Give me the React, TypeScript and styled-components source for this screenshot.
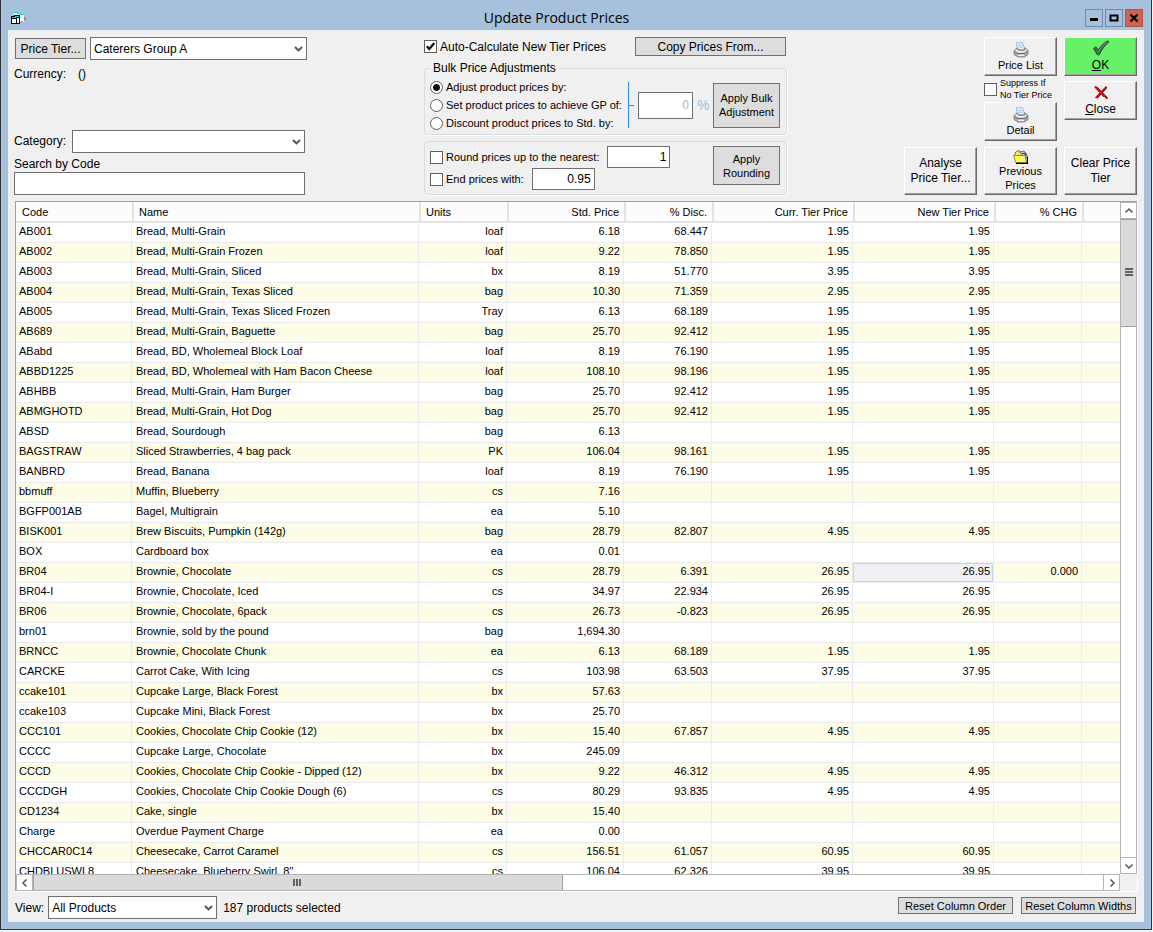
import React from "react";
import styled, { createGlobalStyle, css } from "styled-components";

const GlobalStyle = createGlobalStyle`
  * { box-sizing: border-box; }
  body { margin: 0; background: #f4f4f4; }
  body, button, input, select {
    font-family: "Liberation Sans", Arial, sans-serif;
    font-size: 12px;
    color: #000;
  }
`;

/* ---------- window frame ---------- */

const Window = styled.div`
  height: calc(100vh - 2px);
  min-height: 480px;
  margin-right: 1px;
  display: flex;
  flex-direction: column;
  background: #a7c0dc;
  border: 1px solid #2f3339;
  border-top-width: 0;
  padding: 0 7px 7px;
`;

const TitleBar = styled.header`
  flex: none;
  height: 30px;
  display: flex;
  align-items: center;
  padding: 6px 1px 0 2px;
  > svg { flex: none; }
`;

const Title = styled.h1`
  flex: 1;
  margin: 0;
  text-align: center;
  font: 400 14px/20px "Open Sans", "Noto Sans", sans-serif;
`;

const WindowButtons = styled.div`
  display: flex;
  gap: 2px;
`;

const WindowButton = styled.button<{ $close?: boolean }>`
  width: 18px;
  height: 18px;
  padding: 0;
  display: grid;
  place-items: center;
  border: 1px solid ${(p) => (p.$close ? "#b5533f" : "#6f8aac")};
  background: ${(p) => (p.$close ? "#cf6250" : "#a7c0dc")};
`;

const Client = styled.main`
  flex: 1;
  min-height: 0;
  display: flex;
  flex-direction: column;
  background: #f0f0f0;
  padding: 7px 7px 3px 6px;
`;

/* ---------- shared controls ---------- */

const FlatButton = styled.button<{ $w: number; $h: number; $small?: boolean }>`
  flex: none;
  width: ${(p) => p.$w}px;
  height: ${(p) => p.$h}px;
  padding: 0;
  border: 1px solid #707070;
  background: #dddddd;
  font-size: ${(p) => (p.$small ? 11 : 12)}px;
  line-height: 14px;
`;

const RaisedButton = styled.button<{ $h: number; $green?: boolean; $small?: boolean }>`
  width: 73px;
  height: ${(p) => p.$h}px;
  flex: none;
  padding: 0;
  display: flex;
  flex-direction: column;
  align-items: center;
  justify-content: center;
  gap: ${(p) => (p.$small ? 0 : 2)}px;
  border: 1px solid;
  border-color: #ffffff #696969 #696969 #ffffff;
  box-shadow: inset -1px -1px 0 #a0a0a0;
  background: ${(p) => (p.$green ? "#66f266" : "#f0f0f0")};
  font-size: ${(p) => (p.$small ? 11 : 12)}px;
  line-height: ${(p) => (p.$small ? 14 : 15)}px;
  svg { flex: none; }
`;

const TextInput = styled.input<{ $w?: number; $h: number; $muted?: boolean }>`
  width: ${(p) => (p.$w ? p.$w + "px" : "100%")};
  height: ${(p) => p.$h}px;
  padding: 0 3px 1px;
  border: 1px solid #707070;
  border-radius: 0;
  background: #fff;
  text-align: ${(p) => (p.$w ? "right" : "left")};
  color: ${(p) => (p.$muted ? "#a3b8d6" : "#000")};
`;

const SelectWrap = styled.span<{ $w: number }>`
  position: relative;
  width: ${(p) => p.$w}px;
  height: 23px;
  select {
    appearance: none;
    display: block;
    width: 100%;
    height: 100%;
    padding: 0 20px 0 3px;
    border: 1px solid #707070;
    border-radius: 0;
    background: #fff;
  }
  svg {
    position: absolute;
    right: 4px;
    top: 9px;
    pointer-events: none;
  }
`;

function Select({ id, label, width, options }: { id: string; label?: string; width: number; options: string[] }) {
  return (
    <SelectWrap $w={width}>
      <select id={id} aria-label={label}>
        {options.map((o) => (
          <option key={o}>{o}</option>
        ))}
      </select>
      <svg width="9" height="6" viewBox="0 0 9 6">
        <path d="M1 1 4.500 4.400 8 1" fill="none" stroke="#555" strokeWidth="2" />
      </svg>
    </SelectWrap>
  );
}

const tickBox = css`
  appearance: none;
  flex: none;
  width: 13px;
  height: 13px;
  margin: 0;
  border: 1px solid #606060;
  background: #fff;
`;

const CheckWrap = styled.span`
  display: grid;
  width: 13px;
  height: 13px;
  flex: none;
  input { ${tickBox} grid-area: 1 / 1; }
  svg { grid-area: 1 / 1; visibility: hidden; pointer-events: none; z-index: 1; }
  input:checked + svg { visibility: visible; }
`;

function CheckBox({ id, checked }: { id: string; checked?: boolean }) {
  return (
    <CheckWrap>
      <input id={id} type="checkbox" defaultChecked={checked} />
      <svg width="13" height="13" viewBox="0 0 13 13">
        <path d="M2.800 6.200 5.300 9 10.300 3" fill="none" stroke="#111" strokeWidth="2.200" />
      </svg>
    </CheckWrap>
  );
}

const Radio = styled.input`
  ${tickBox}
  border-radius: 50%;
  &:checked { background: radial-gradient(circle, #111 0 3px, #fff 4px); }
`;

const Row = styled.div<{ $gap?: number }>`
  display: flex;
  align-items: center;
  gap: ${(p) => p.$gap ?? 4}px;
`;

const Spread = styled.div`
  display: flex;
  justify-content: space-between;
`;

/* ---------- toolbar ---------- */

const Toolbar = styled.section`
  flex: none;
  display: flex;
  justify-content: space-between;
  margin-bottom: 6px;
`;

const Filters = styled.div`
  width: 293px;
  display: flex;
  flex-direction: column;
`;

const TierRow = styled(Row)`
  padding-left: 1px;
`;

const Currency = styled.p`
  margin: 6px 0 0;
  line-height: 16px;
  display: flex;
  gap: 12px;
`;

const SearchArea = styled.div`
  width: 291px;
  margin-top: auto;
  display: flex;
  flex-direction: column;
`;

const SearchLabel = styled.label`
  margin-top: 3px;
  line-height: 16px;
`;

const Adjustments = styled.div`
  width: 363px;
`;

const TopRow = styled.div`
  display: flex;
  justify-content: space-between;
  height: 19px;
  padding-right: 1px;
  align-items: center;
`;

const Group = styled.fieldset`
  margin: 4px 0 0;
  min-width: 0;
  padding: 2px 6px 2px 5px;
  border: 1px solid #d3dde5;
  border-radius: 3px;
  box-shadow: 0 1px 0 #fff, 1px 0 0 #fff;
  font-size: 11px;
  legend {
    padding: 0 3px;
    font-size: 12px;
    line-height: 16px;
  }
`;

const RoundingGroup = styled(Group)`
  margin-top: 6px;
  padding-top: 4px;
  padding-bottom: 4px;
`;

const AdjustBody = styled.div`
  display: flex;
  align-items: center;
`;

const Choices = styled.div`
  width: 193px;
  label { display: flex; align-items: center; gap: 3px; height: 18px; white-space: nowrap; }
`;

const Bracket = styled.svg`
  flex: none;
  margin-left: 4px;
  margin-right: 4px;
  fill: #2e8df0;
`;

const Percent = styled.span`
  flex: 1;
  padding-left: 4px;
  font-size: 14px;
  color: #a3b8d6;
`;

const Rounding = styled.div`
  display: flex;
  flex-direction: column;
`;

const RoundRow = styled.div`
  display: flex;
  align-items: center;
  gap: 3px;
  height: 22px;
  input[type="text"] { margin-left: 5px; }
`;

const Actions = styled.div`
  display: flex;
  gap: 7px;
`;

const ActionColumn = styled.div<{ $end?: boolean }>`
  display: flex;
  flex-direction: column;
  justify-content: ${(p) => (p.$end ? "flex-end" : "flex-start")};
  height: 158px;
  > :last-child { margin-top: auto; }
`;

const CloseSlot = styled.div`
  margin-top: 5px;
  display: flex;
`;

const Suppress = styled.label`
  display: flex;
  align-items: center;
  gap: 3px;
  height: 26px;
  font-size: 9px;
  line-height: 12px;
  white-space: nowrap;
`;

/* ---------- price grid ---------- */

const GridFrame = styled.section`
  flex: 1;
  min-height: 0;
  margin-left: 1px;
  display: grid;
  grid-template-columns: minmax(0, 1fr) 17px;
  grid-template-rows: minmax(0, 1fr) 17px;
  border-top: 1px solid #a0a0a0;
  border-left: 1px solid #a0a0a0;
  box-shadow: 0 1px 0 #fff, 1px 0 0 #fff;
`;

const GridView = styled.div`
  overflow: hidden;
  background: #fff;
`;

const Table = styled.table`
  width: 100%;
  table-layout: fixed;
  border-collapse: separate;
  border-spacing: 0;
  font-size: 11px;
`;

const Th = styled.th<{ $left?: boolean }>`
  height: 21px;
  padding: 0 5px;
  font-weight: 400;
  text-align: ${(p) => (p.$left ? "left" : "right")};
  background: #fcfcfc;
  border-left: 2px solid #e2e2e2;
  border-bottom: 2px solid #e4e4e4;
  &:first-child { border-left: 0; padding-left: 6px; }
`;

const Tr = styled.tr`
  background: #fff;
  &:nth-child(even) { background: #fcfbe6; }
`;

const Td = styled.td<{ $left?: boolean; $selected?: boolean }>`
  height: 20px;
  padding: 0 3px 3px 4px;
  line-height: 16px;
  white-space: nowrap;
  overflow: hidden;
  text-align: ${(p) => (p.$left ? "left" : "right")};
  border-right: 1px solid #ececf0;
  border-bottom: 1px solid #ececf0;
  &:first-child { padding-left: 3px; }
  &:last-child { border-right: 0; }
  ${(p) => p.$selected && css`
    background: #eef0f4;
    box-shadow: inset 0 0 0 1px #c3d5ea;
  `}
`;

const Bar = styled.div<{ $vertical?: boolean }>`
  display: flex;
  flex-direction: ${(p) => (p.$vertical ? "column" : "row")};
  background: #fff;
  border: 0 solid #b4b4b4;
  ${(p) => (p.$vertical ? "border-left-width: 1px; border-right-width: 1px;" : "border-top-width: 1px; border-bottom-width: 1px;")}
`;

const BarButton = styled.button<{ $vertical?: boolean }>`
  flex: none;
  width: ${(p) => (p.$vertical ? "100%" : "17px")};
  height: ${(p) => (p.$vertical ? "17px" : "100%")};
  padding: 0;
  display: grid;
  place-items: center;
  background: #fff;
  border: 0 solid #b4b4b4;
  ${(p) => (p.$vertical ? "border-top-width: 1px; border-bottom-width: 1px;" : "border-left-width: 1px; border-right-width: 1px;")}
`;

const Thumb = styled.div<{ $vertical?: boolean }>`
  flex: 0 0 auto;
  ${(p) => (p.$vertical ? "height: 16%;" : "width: 48%;")}
  display: grid;
  place-items: center;
  background: #dadada;
  border: 0 solid #a0a0a0;
  ${(p) => (p.$vertical ? "border-top-width: 1px; border-bottom-width: 1px;" : "border-left-width: 1px; border-right-width: 1px;")}
`;

const Track = styled.div`
  flex: 1;
`;

/* ---------- footer ---------- */

const Footer = styled.footer`
  flex: none;
  display: flex;
  align-items: center;
  height: 28px;
  padding: 5px 1px 0;
  label { margin-right: 4px; }
`;

const Count = styled.span`
  flex: 1;
  margin-left: 6px;
`;

const ResetButtons = styled(Row)`
  align-self: flex-start;
  padding-top: 1px;
`;

/* ---------- icons ---------- */

const AppIcon = () => (
  <svg width="18" height="14" viewBox="0 0 18 14" shapeRendering="crispEdges">
    <path d="M4 2h4v1h3v1h3v7H9V4H4z" fill="#fff" />
    <path d="M4 1h4v1H4zM7 2h4v1H7zM10 3h4v1h-4z" fill="#00e0f0" />
    <path d="M14 6h1v1h1v2h-2zM9 11h2v1H9zM11 10h2v1h-2z" fill="#888" />
    <path d="M4 4h6v9H4z" fill="#000" />
    <path d="M1 5h6v8H1z" fill="#000" />
    <path d="M5 5h4v1H5zM2 6h4v1H2z" fill="#00e0f0" />
    <path d="M7 7h2v5H7zM2 8h4v4H2z" fill="#fff" />
  </svg>
);

const Printer = () => (
  <svg width="16" height="16" viewBox="0 0 16 16">
    <path d="M3 .8h6.500l2.500 7H5z" fill="#eef6ff" stroke="#8fb0dd" strokeWidth=".9" />
    <path d="M4.800 3.200h4.400M5.500 5.200h4.400" stroke="#9cc0ee" />
    <path d="M1 8.800 3.800 6l1 .3.900 1.700h6l-.6-2h1.400L15 8.800v3.700L11.500 15H5l-4-2.500z" fill="#b2b2b2" stroke="#747474" strokeWidth=".8" />
    <path d="M1.800 9 4 7l1.200 2h6.900l-.4-2.200L14 8.900 11 10.800H4.800z" fill="#ececec" />
    <path d="M1.300 9.500 5 11.500h6.500l3.300-2.300" fill="none" stroke="#5c5c5c" strokeWidth=".9" />
    <path d="M5.300 13.300h5.700" stroke="#f5f5f5" strokeWidth="1.300" />
    <path d="M12.300 12.300h1.200" stroke="#6fa850" />
  </svg>
);

const Tick = () => (
  <svg width="18" height="16" viewBox="0 0 18 16">
    <path d="M1.500 8.500 4 6.800 6.500 10C8.500 6 11.500 3 16 .800l.6 1.400C12.800 5.500 9.500 9.500 7.300 14.800H5.300z" fill="#2f7d3b" stroke="#4a2a4a" strokeWidth=".9" />
    <path d="M6.300 12C8.500 7.500 11.500 4.500 15 2.300" fill="none" stroke="#57b062" strokeWidth=".9" />
  </svg>
);

const Cross = () => (
  <svg width="16" height="15" viewBox="0 0 16 15">
    <path d="M4 2.500 14.500 13.500M13.800 2.300 4 13" stroke="#000" strokeWidth="1.200" />
    <path d="M2 1.500 11.500 11.500" stroke="#f0000c" strokeWidth="2.400" />
    <path d="M11 11 14 13.800" stroke="#f0000c" strokeWidth="1" />
    <path d="M13.500 1.500 2.500 13" stroke="#f0000c" strokeWidth="1.700" />
  </svg>
);

const Folder = () => (
  <svg width="16" height="14" viewBox="0 0 16 14">
    <path d="M2 5V3l2-2h3l1.500 2H13v4" fill="#f4ee4a" stroke="#6b6b00" strokeWidth=".9" />
    <path d="M7 2.500 11 1l4 6-3 1z" fill="#fff" stroke="#223" strokeWidth=".7" />
    <path d="M9 3.500h3l1 3" fill="none" stroke="#2244bb" strokeWidth="1.300" />
    <path d="M.700 5.500h11.500l1 7H2.500z" fill="#fff35a" stroke="#8a8a20" strokeWidth=".9" />
    <path d="M2.500 7.500h8.500M3 9.500h9M3.500 11.300h9" stroke="#fffde0" strokeDasharray="1 1" />
    <path d="M3 13.400h11.400V7" fill="none" stroke="#000" strokeWidth="1.200" />
  </svg>
);

const arrows = {
  up: "M1.500 6.500 5 3l3.500 3.500",
  down: "M1.500 3.500 5 7l3.500-3.500",
  left: "M6.500 1.500 3 5l3.500 3.500",
  right: "M3.500 1.500 7 5 3.500 8.500",
};

const Arrow = ({ dir }: { dir: keyof typeof arrows }) => (
  <svg width="10" height="10" viewBox="0 0 10 10">
    <path d={arrows[dir]} fill="none" stroke="#555" strokeWidth="1.500" />
  </svg>
);

/* ---------- data ---------- */

const columns: { name: string; width?: number; left?: boolean }[] = [
  { name: "Code", width: 116, left: true },
  { name: "Name", width: 287, left: true },
  { name: "Units", width: 88, left: true },
  { name: "Std. Price", width: 117 },
  { name: "% Disc.", width: 88 },
  { name: "Curr. Tier Price", width: 141 },
  { name: "New Tier Price", width: 141 },
  { name: "% CHG", width: 88 },
  { name: "" },
];

// code, name, units, standard price, discount, tier price, change
const products: string[][] = [
  ["AB001", "Bread, Multi-Grain", "loaf", "6.18", "68.447", "1.95"],
  ["AB002", "Bread, Multi-Grain Frozen", "loaf", "9.22", "78.850", "1.95"],
  ["AB003", "Bread, Multi-Grain, Sliced", "bx", "8.19", "51.770", "3.95"],
  ["AB004", "Bread, Multi-Grain, Texas Sliced", "bag", "10.30", "71.359", "2.95"],
  ["AB005", "Bread, Multi-Grain, Texas Sliced Frozen", "Tray", "6.13", "68.189", "1.95"],
  ["AB689", "Bread, Multi-Grain, Baguette", "bag", "25.70", "92.412", "1.95"],
  ["ABabd", "Bread, BD, Wholemeal Block Loaf", "loaf", "8.19", "76.190", "1.95"],
  ["ABBD1225", "Bread, BD, Wholemeal with Ham Bacon Cheese", "loaf", "108.10", "98.196", "1.95"],
  ["ABHBB", "Bread, Multi-Grain, Ham Burger", "bag", "25.70", "92.412", "1.95"],
  ["ABMGHOTD", "Bread, Multi-Grain, Hot Dog", "bag", "25.70", "92.412", "1.95"],
  ["ABSD", "Bread, Sourdough", "bag", "6.13"],
  ["BAGSTRAW", "Sliced Strawberries, 4 bag pack", "PK", "106.04", "98.161", "1.95"],
  ["BANBRD", "Bread, Banana", "loaf", "8.19", "76.190", "1.95"],
  ["bbmuff", "Muffin, Blueberry", "cs", "7.16"],
  ["BGFP001AB", "Bagel, Multigrain", "ea", "5.10"],
  ["BISK001", "Brew Biscuits, Pumpkin (142g)", "bag", "28.79", "82.807", "4.95"],
  ["BOX", "Cardboard box", "ea", "0.01"],
  ["BR04", "Brownie, Chocolate", "cs", "28.79", "6.391", "26.95", "0.000"],
  ["BR04-I", "Brownie, Chocolate, Iced", "cs", "34.97", "22.934", "26.95"],
  ["BR06", "Brownie, Chocolate, 6pack", "cs", "26.73", "-0.823", "26.95"],
  ["brn01", "Brownie, sold by the pound", "bag", "1,694.30"],
  ["BRNCC", "Brownie, Chocolate Chunk", "ea", "6.13", "68.189", "1.95"],
  ["CARCKE", "Carrot Cake, With Icing", "cs", "103.98", "63.503", "37.95"],
  ["ccake101", "Cupcake Large, Black Forest", "bx", "57.63"],
  ["ccake103", "Cupcake Mini, Black Forest", "bx", "25.70"],
  ["CCC101", "Cookies, Chocolate Chip Cookie (12)", "bx", "15.40", "67.857", "4.95"],
  ["CCCC", "Cupcake Large, Chocolate", "bx", "245.09"],
  ["CCCD", "Cookies, Chocolate Chip Cookie - Dipped (12)", "bx", "9.22", "46.312", "4.95"],
  ["CCCDGH", "Cookies, Chocolate Chip Cookie Dough (6)", "cs", "80.29", "93.835", "4.95"],
  ["CD1234", "Cake, single", "bx", "15.40"],
  ["Charge", "Overdue Payment Charge", "ea", "0.00"],
  ["CHCCAR0C14", "Cheesecake, Carrot Caramel", "cs", "156.51", "61.057", "60.95"],
  ["CHDBLUSWL8", "Cheesecake, Blueberry Swirl, 8\"", "cs", "106.04", "62.326", "39.95"],
];

export default function App() {
  return (
    <>
      <GlobalStyle />
      <Window>
        <TitleBar>
          <AppIcon />
          <Title>Update Product Prices</Title>
          <WindowButtons>
            <WindowButton aria-label="Minimize">
              <svg width="10" height="10" viewBox="0 0 10 10"><path d="M1 6.500h8" stroke="#000" strokeWidth="3" /></svg>
            </WindowButton>
            <WindowButton aria-label="Maximize">
              <svg width="10" height="10" viewBox="0 0 10 10"><path d="M1.500 2.500h7v5h-7z" fill="none" stroke="#000" strokeWidth="2" /></svg>
            </WindowButton>
            <WindowButton $close aria-label="Close window">
              <svg width="10" height="10" viewBox="0 0 10 10"><path d="m1.500 1.500 7 7m0-7-7 7" stroke="#000" strokeWidth="2.200" /></svg>
            </WindowButton>
          </WindowButtons>
        </TitleBar>

        <Client>
          <Toolbar>
            <Filters>
              <TierRow>
                <FlatButton $w={71} $h={21}>Price Tier...</FlatButton>
                <Select id="tier" label="Price tier" width={217} options={["Caterers Group A"]} />
              </TierRow>
              <Currency><span>Currency:</span><span>()</span></Currency>
              <SearchArea>
                <Spread>
                  <SearchLabel htmlFor="category">Category:</SearchLabel>
                  <Select id="category" width={233} options={[""]} />
                </Spread>
                <SearchLabel htmlFor="search">Search by Code</SearchLabel>
                <TextInput id="search" type="text" $h={23} />
              </SearchArea>
            </Filters>

            <Adjustments>
              <TopRow>
                <Row $gap={3}>
                  <CheckBox id="auto" checked />
                  <label htmlFor="auto">Auto-Calculate New Tier Prices</label>
                </Row>
                <FlatButton $w={151} $h={19}>Copy Prices From...</FlatButton>
              </TopRow>
              <Group>
                <legend>Bulk Price Adjustments</legend>
                <AdjustBody>
                  <Choices>
                    <label><Radio type="radio" name="mode" defaultChecked />Adjust product prices by:</label>
                    <label><Radio type="radio" name="mode" />Set product prices to achieve GP of:</label>
                    <label><Radio type="radio" name="mode" />Discount product prices to Std. by:</label>
                  </Choices>
                  <Bracket width="7" height="46" viewBox="0 0 7 46">
                    <path d="M1 0h1v23h5v1H2v22H1z" />
                  </Bracket>
                  <TextInput type="text" aria-label="Adjustment percentage" $w={55} $h={27} $muted defaultValue="0" />
                  <Percent>%</Percent>
                  <FlatButton $w={67} $h={45} $small>Apply Bulk<br />Adjustment</FlatButton>
                </AdjustBody>
              </Group>
              <RoundingGroup>
                <Spread>
                  <Rounding>
                    <RoundRow>
                      <CheckBox id="round" />
                      <label htmlFor="round">Round prices up to the nearest:</label>
                      <TextInput type="text" aria-label="Nearest" $w={63} $h={22} defaultValue="1" />
                    </RoundRow>
                    <RoundRow>
                      <CheckBox id="end" />
                      <label htmlFor="end">End prices with:</label>
                      <TextInput type="text" aria-label="Ending" $w={63} $h={22} defaultValue="0.95" />
                    </RoundRow>
                  </Rounding>
                  <FlatButton $w={67} $h={39} $small>Apply<br />Rounding</FlatButton>
                </Spread>
              </RoundingGroup>
            </Adjustments>

            <Actions>
              <ActionColumn $end>
                <RaisedButton $h={48}><span>Analyse<br />Price Tier...</span></RaisedButton>
              </ActionColumn>
              <ActionColumn>
                <RaisedButton $h={39} $small><Printer />Price List</RaisedButton>
                <Suppress htmlFor="suppress">
                  <CheckBox id="suppress" />
                  <span>Suppress If<br />No Tier Price</span>
                </Suppress>
                <RaisedButton $h={39} $small><Printer />Detail</RaisedButton>
                <RaisedButton $h={48} $small><Folder /><span>Previous<br />Prices</span></RaisedButton>
              </ActionColumn>
              <ActionColumn>
                <RaisedButton $h={39} $green><Tick /><span><u>O</u>K</span></RaisedButton>
                <CloseSlot>
                  <RaisedButton $h={39}><Cross /><span><u>C</u>lose</span></RaisedButton>
                </CloseSlot>
                <RaisedButton $h={48}><span>Clear Price<br />Tier</span></RaisedButton>
              </ActionColumn>
            </Actions>
          </Toolbar>

          <GridFrame>
            <GridView>
              <Table>
                <colgroup>
                  {columns.map((c) => (
                    <col key={c.name} width={c.width} />
                  ))}
                </colgroup>
                <thead>
                  <tr>
                    {columns.map((c) => (
                      <Th key={c.name} $left={c.left}>{c.name}</Th>
                    ))}
                  </tr>
                </thead>
                <tbody>
                  {products.map(([code, name, units, std, disc, tier, chg]) => (
                    <Tr key={code}>
                      <Td $left>{code}</Td>
                      <Td $left>{name}</Td>
                      <Td>{units}</Td>
                      <Td>{std}</Td>
                      <Td>{disc}</Td>
                      <Td>{tier}</Td>
                      <Td $selected={code === "BR04"}>{tier}</Td>
                      <Td>{chg}</Td>
                      <Td />
                    </Tr>
                  ))}
                </tbody>
              </Table>
            </GridView>
            <Bar $vertical>
              <BarButton $vertical aria-label="Scroll up"><Arrow dir="up" /></BarButton>
              <Thumb $vertical>
                <svg width="8" height="9" viewBox="0 0 8 9"><path d="M0 1h8M0 4h8M0 7h8" stroke="#606060" strokeWidth="2" /></svg>
              </Thumb>
              <Track />
              <BarButton $vertical aria-label="Scroll down"><Arrow dir="down" /></BarButton>
            </Bar>
            <Bar>
              <BarButton aria-label="Scroll left"><Arrow dir="left" /></BarButton>
              <Thumb>
                <svg width="9" height="8" viewBox="0 0 9 8"><path d="M1 0v7M4 0v7M7 0v7" stroke="#606060" strokeWidth="2" /></svg>
              </Thumb>
              <Track />
              <BarButton aria-label="Scroll right"><Arrow dir="right" /></BarButton>
            </Bar>
          </GridFrame>

          <Footer>
            <label htmlFor="view">View:</label>
            <Select id="view" width={169} options={["All Products"]} />
            <Count>187 products selected</Count>
            <ResetButtons $gap={8}>
              <FlatButton $w={115} $h={17} $small>Reset Column Order</FlatButton>
              <FlatButton $w={115} $h={17} $small>Reset Column Widths</FlatButton>
            </ResetButtons>
          </Footer>
        </Client>
      </Window>
    </>
  );
}
